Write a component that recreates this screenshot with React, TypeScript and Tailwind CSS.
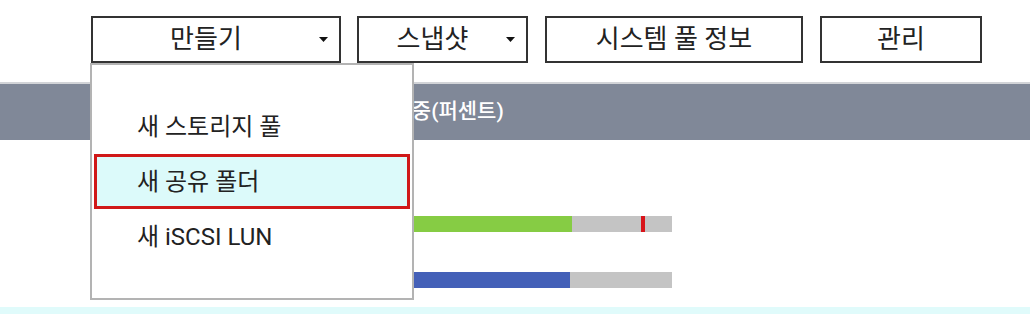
import React from 'react';

const FONT = { fontFamily: 'Roboto, "Noto Sans CJK KR", sans-serif' };

const Caret: React.FC = () => (
  <svg viewBox="0 0 9 5" className="w-[9px] h-[5px] mr-[11px] shrink-0">
    <path d="M0 0 H9 L4.5 5 Z" fill="#111" />
  </svg>
);

const rows = [
  { used: 0, color: '', marker: false, empty: true },
  { used: 200, color: 'bg-[#86cc44]', marker: true, empty: false },
  { used: 198, color: 'bg-[#4460b8]', marker: false, empty: false },
];

const App: React.FC = () => {
  return (
    <div className="w-[1030px] h-[314px] overflow-hidden bg-white relative text-[#222]" style={FONT}>
      {/* toolbar */}
      <div className="flex items-start pl-[91px] pt-[16px] h-[82px]">
        <button className="w-[250px] h-[47px] border-2 border-[#333] flex items-center text-[26px]">
          <span className="flex-1 text-center">만들기</span>
          <Caret />
        </button>
        <button className="ml-[16px] w-[171px] h-[47px] border-2 border-[#333] flex items-center text-[26px]">
          <span className="flex-1 text-center">스냅샷</span>
          <Caret />
        </button>
        <button className="ml-[17px] w-[258px] h-[47px] border-2 border-[#333] flex items-center justify-center text-[26px]">
          시스템 풀 정보
        </button>
        <button className="ml-[17px] w-[162px] h-[47px] border-2 border-[#333] flex items-center justify-center text-[26px]">
          관리
        </button>
      </div>

      {/* table */}
      <div className="border-t-2 border-[#d2d4d8]">
        <div className="h-[56px] bg-[#808898] flex items-center text-white text-[21px] font-medium">
          <div className="w-[368px] shrink-0" />
          <div className="flex-1">사용 중(퍼센트)</div>
        </div>
        {rows.map((r, i) => (
          <div key={i} className={`flex items-center ${i === 2 ? 'h-[55px]' : 'h-[56px]'}`}>
            <div className="w-[372px] shrink-0" />
            {!r.empty && (
              <div className="relative w-[300px] h-[16px] bg-[#c4c4c4]">
                <div className={`h-full ${r.color}`} style={{ width: r.used }} />
                {r.marker && <div className="absolute top-0 left-[269px] w-[4px] h-full bg-[#d8141a]" />}
              </div>
            )}
          </div>
        ))}
        <div className="h-[56px] bg-[#e0fbfb]" />
      </div>

      {/* open dropdown menu */}
      <div className="absolute left-[90px] top-[63px] w-[324px] h-[237px] bg-white border-2 border-[#b3b3b3] py-[34px] text-[24px] text-[#222]">
        <div className="h-[55px] flex items-center pl-[45px]">새 스토리지 풀</div>
        <div className="h-[55px] mx-[2px] flex items-center pl-[40px] bg-[#dcfafa] border-[3px] border-[#d01818]">새 공유 폴더</div>
        <div className="h-[55px] flex items-center pl-[45px]">새 iSCSI LUN</div>
      </div>
    </div>
  );
};

export default App;
